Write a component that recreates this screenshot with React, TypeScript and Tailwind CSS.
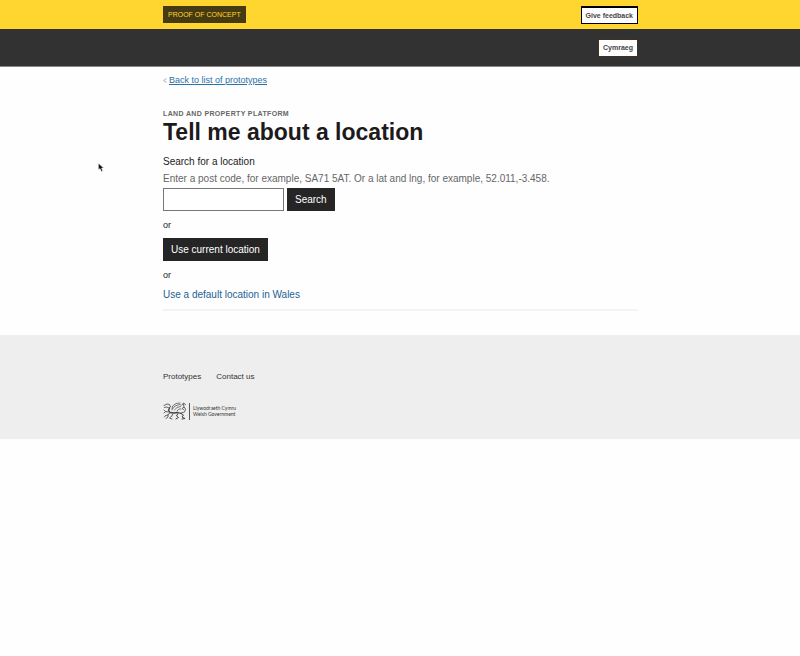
import type { ReactNode } from 'react';

function Container({ children, className = '' }: { children: ReactNode; className?: string }) {
  return <div className={`mx-auto w-full max-w-[476px] pl-px ${className}`}>{children}</div>;
}

function WelshDragon() {
  return (
    <svg className="h-[18px] w-6" viewBox="0 0 24 18" fill="none" stroke="#444" strokeLinecap="round" strokeLinejoin="round" aria-hidden="true">
      <path d="M1 3.5 4 2 6.500 2.500 7.500 5 6 6 3.500 5 1.500 5.500" strokeWidth=".8" />
      <path d="M6.500 6 5.500 8.500 7 10.500 11 11 15 10.500 18 11.500" strokeWidth="1.300" />
      <path d="M9 8 9.500 4 13 1.500 17 1M9.500 7 12 4 16.500 2.500 18 3M11.500 8 14 5.500 17.500 4.500M14 9 16 7 18 7" strokeWidth=".7" />
      <path d="M5 10 2.500 9.500 1 8M2.500 9.500 1 11M6.500 11 5 13 2.500 13.500 1.500 15M5 13 5 15 3 16.500M9.500 12 9 14 6.500 16 9 17" strokeWidth=".8" />
      <path d="M15 11.500 13.500 14 15.500 15.500 13 17M18 11.500 20.500 13 19 15 22 16.500 19 17" strokeWidth="1" />
      <path d="M18 11 21.500 10 22.500 7 21 5 19 6.500 20.500 7.500M21 5 20.500 2M19 3 20.500 1 22.500 2.500" strokeWidth=".8" />
    </svg>
  );
}

export default function App() {
  return (
    <div className="min-h-screen bg-[#fefefe] font-['Liberation_Sans',Arial,sans-serif] text-[10px] leading-3 text-[#222]">
      <div className="bg-[#ffd530]">
        <Container className="flex h-[29px] items-center justify-between">
          <strong className="flex h-[17px] items-center bg-[#453a12] px-[5px] text-[7px] font-normal text-[#ffd530]">PROOF OF CONCEPT</strong>
          <button type="button" className="mt-px h-[18px] border border-t-2 border-black bg-white px-1 text-[7px] leading-3 font-bold text-[#444]">Give feedback</button>
        </Container>
      </div>
      <header className="border-b border-[#888] bg-[#323232]">
        <Container className="flex h-[37px] items-center justify-end">
          <button type="button" className="h-[18px] border border-[#3c3420] bg-white px-1 text-[7px] leading-3 font-bold text-[#444]">Cymraeg</button>
        </Container>
      </header>
      <main>
        <Container className="pt-[7px]">
          <nav className="flex items-center gap-0.5 text-[9px]">
            <svg className="h-[5px] w-1" viewBox="0 0 4 5" fill="none" stroke="#777" aria-hidden="true"><path d="M3 .5 1 2.500 3 4.500" strokeWidth=".8" /></svg>
            <a href="#prototypes" className="text-[#2a72a8] underline">Back to list of prototypes</a>
          </nav>
          <p className="mt-[22px] text-[7px] font-bold tracking-wider text-[#666]">LAND AND PROPERTY PLATFORM</p>
          <h1 className="text-[23px] leading-6 font-bold text-[#1c1a1b]">Tell me about a location</h1>
          <form className="mt-3">
            <label htmlFor="location" className="block">Search for a location</label>
            <p id="hint" className="mt-[5px] text-[#666]">Enter a post code, for example, SA71 5AT. Or a lat and lng, for example, 52.011,-3.458.</p>
            <div className="mt-[3px] flex gap-[3px]">
              <input id="location" aria-describedby="hint" className="h-[23px] w-[121px] border border-[#777] bg-white px-1" />
              <button type="submit" className="h-[23px] bg-[#262525] px-2 text-white">Search</button>
            </div>
          </form>
          <p className="mt-2 text-[9px]">or</p>
          <button type="button" className="mt-[7px] block h-[23px] bg-[#262525] px-2 text-white">Use current location</button>
          <p className="mt-2 text-[9px]">or</p>
          <a href="#default" className="mt-2 block text-[#236394]">Use a default location in Wales</a>
          <hr className="mt-2 border-t-2 border-[#f3f3f3]" />
        </Container>
      </main>
      <footer className="mt-6 bg-[#eee]">
        <Container className="pt-9 pb-[19px]">
          <nav className="flex gap-[15px] text-[8px] text-[#333]">
            <a href="#prototypes">Prototypes</a>
            <a href="#contact">Contact us</a>
          </nav>
          <div className="mt-[19px] flex items-center text-[5px] leading-[6px] text-[#333]">
            <WelshDragon />
            <span className="ml-[2px] h-[17px] border-l border-[#555]" />
            <p className="ml-[3px] font-['Lato',sans-serif]">Llywodraeth Cymru<br />Welsh Government</p>
          </div>
        </Container>
      </footer>
      <svg className="absolute top-[163px] left-[98px] h-[9px] w-[6px]" viewBox="0 0 6 9" aria-hidden="true"><path d="M.5 .5V6.500L2 5.500 3.500 8.500 4.500 8 3.500 5H5.500Z" fill="#111" stroke="#ddd" strokeWidth=".4" /></svg>
    </div>
  );
}
